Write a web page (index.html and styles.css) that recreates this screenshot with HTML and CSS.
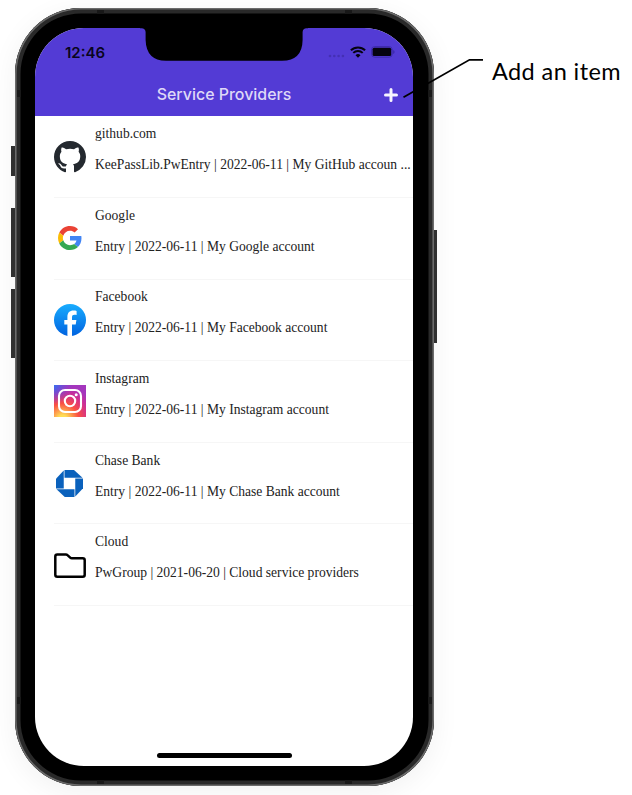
FILE: index.html
```html
<!DOCTYPE html>
<html lang="en">
<head>
<meta charset="utf-8">
<title>Service Providers</title>
<link rel="stylesheet" href="styles.css">
</head>
<body>
<main class="stage">
  <div class="phone">
    <i class="key mute"></i><i class="key vol-up"></i><i class="key vol-down"></i><i class="key power"></i>
    <i class="band top left"></i><i class="band top right"></i><i class="band bottom left"></i><i class="band bottom right"></i>
    <i class="band side-l upper"></i><i class="band side-r upper"></i><i class="band side-l lower"></i><i class="band side-r lower"></i>
    <div class="screen">
      <header class="header">
        <div class="status">
          <span class="time">12:46</span>
          <span class="signals">
            <svg class="dots" width="17" height="4" viewBox="0 0 17 4"><circle cx="2" cy="2" r="1.3"/><circle cx="6.3" cy="2" r="1.3"/><circle cx="10.6" cy="2" r="1.3"/><circle cx="14.9" cy="2" r="1.3"/></svg>
            <svg class="wifi" width="16" height="12" viewBox="0 0 16 12"><path d="M.9 4.3a10.2 10.2 0 0 1 14.2 0M3.3 6.9a6.8 6.8 0 0 1 9.4 0" fill="none" stroke="#050310" stroke-width="2"/><path d="M8 11.8 5.5 9.2a3.6 3.6 0 0 1 5 0z" fill="#050310"/></svg>
            <svg class="battery" width="24" height="12" viewBox="0 0 24 12"><rect x=".6" y=".6" width="20.6" height="10.6" rx="3" fill="none" stroke="#3d2aac" stroke-width="1"/><rect x="1.600" y="1.700" width="18.600" height="8.400" rx="1.5" fill="#050310"/><path d="M22.3 4v4q1.2-.5 1.2-2t-1.2-2" fill="#3725a0"/></svg>
          </span>
        </div>
        <div class="nav">
          <h1 class="title">Service Providers</h1>
          <svg class="add" width="14" height="14" viewBox="0 0 14 14"><path d="M7 1.500v11M1.500 7h11" stroke="#f7f4ff" stroke-width="3" stroke-linecap="round"/></svg>
        </div>
        <svg class="notch" width="168" height="34" viewBox="0 0 168 34"><path d="M0 0h168v.3h-1.5Q163 .3 162.600 4v8Q162.300 32.700 142 32.700H26Q6.300 32.700 5.600 12V4Q5.200.3 1.500.3H0z"/></svg>
      </header>
      <ul class="list">
        <li class="row">
          <svg class="icon" viewBox="0 0 16 16"><path fill="#24292f" d="M8 0C3.580 0 0 3.580 0 8c0 3.540 2.290 6.530 5.470 7.590.4.070.550-.170.550-.380 0-.190-.010-.820-.010-1.490-2.010.370-2.530-.490-2.690-.940-.090-.230-.480-.940-.820-1.130-.280-.150-.680-.520-.010-.530.630-.010 1.080.580 1.230.820.720 1.210 1.870.870 2.330.660.070-.520.280-.870.510-1.070-1.780-.2-3.640-.890-3.640-3.950 0-.870.310-1.590.820-2.150-.080-.2-.360-1.020.080-2.120 0 0 .670-.210 2.200.820.640-.180 1.320-.270 2-.270s1.360.090 2 .270c1.530-1.040 2.200-.820 2.200-.820.440 1.100.160 1.920.080 2.120.510.560.820 1.270.820 2.150 0 3.070-1.870 3.750-3.650 3.950.290.250.540.730.540 1.480 0 1.070-.010 1.930-.010 2.200 0 .210.150.460.550.380A8.010 8.010 0 0 0 16 8c0-4.420-3.580-8-8-8"/></svg>
          <div class="text"><b>github.com</b><span>KeePassLib.PwEntry | 2022-06-11 | My GitHub accoun ...</span></div>
        </li>
        <li class="row">
          <svg class="icon google" viewBox="0 0 48 48"><path fill="#EA4335" d="M24 9.500c3.540 0 6.710 1.220 9.210 3.600l6.850-6.850C35.900 2.380 30.470 0 24 0 14.620 0 6.510 5.380 2.560 13.220l7.980 6.190C12.430 13.720 17.740 9.500 24 9.500"/><path fill="#4285F4" d="M46.980 24.550c0-1.570-.150-3.090-.380-4.550H24v9.020h12.940c-.580 2.960-2.260 5.480-4.780 7.180l7.730 6c4.510-4.180 7.090-10.360 7.090-17.650"/><path fill="#FBBC05" d="M10.530 28.590c-.480-1.450-.760-2.990-.760-4.590s.270-3.140.760-4.590l-7.980-6.190A24 24 0 0 0 0 24c0 3.880.920 7.540 2.560 10.780z"/><path fill="#34A853" d="M24 48c6.480 0 11.930-2.130 15.890-5.810l-7.730-6c-2.150 1.450-4.920 2.300-8.160 2.300-6.260 0-11.570-4.220-13.470-9.910l-7.980 6.190C6.510 42.620 14.620 48 24 48"/></svg>
          <div class="text"><b>Google</b><span>Entry | 2022-06-11 | My Google account</span></div>
        </li>
        <li class="row">
          <svg class="icon" viewBox="0 0 32 32"><defs><linearGradient id="fb" x1="0" y1="0" x2="0" y2="1"><stop stop-color="#18acfe"/><stop offset="1" stop-color="#0163e0"/></linearGradient></defs><circle cx="16" cy="16" r="16" fill="url(#fb)"/><path fill="#fff" d="M13.400 31.800V20.600H10.300V16h3.100v-2.800c0-4.500 2.300-6.600 6.100-6.600 1.200 0 2.200.100 3.100.300v4.100c-.6-.1-1.400-.2-2.100-.2-1.800 0-2.500.7-2.500 2.600V16h4.400l-.7 4.600H18v11.300q-2.300.3-4.600-.1"/></svg>
          <div class="text"><b>Facebook</b><span>Entry | 2022-06-11 | My Facebook account</span></div>
        </li>
        <li class="row">
          <svg class="icon" viewBox="0 0 32 32"><defs><radialGradient id="ig" cx=".27" cy="1.080" r="1.050"><stop stop-color="#fd5"/><stop offset=".13" stop-color="#fd5"/><stop offset=".48" stop-color="#fa5042"/><stop offset=".78" stop-color="#cf2e92"/><stop offset="1" stop-color="#a436bd"/></radialGradient><radialGradient id="ib" cx="0" cy="0" r=".6"><stop stop-color="#3771f0"/><stop offset=".25" stop-color="#5b58df"/><stop offset="1" stop-color="#8040d0" stop-opacity="0"/></radialGradient></defs><path fill="url(#ig)" d="M0 0h32v32H0z"/><path fill="url(#ib)" d="M0 0h32v32H0z"/><g fill="none" stroke="#fff" stroke-width="2.100"><rect x="5" y="5" width="22" height="22" rx="6"/><circle cx="16" cy="16" r="5.200"/></g><circle cx="22.200" cy="9.800" r="1.500" fill="#fff"/></svg>
          <div class="text"><b>Instagram</b><span>Entry | 2022-06-11 | My Instagram account</span></div>
        </li>
        <li class="row">
          <svg class="icon chase" viewBox="0 0 54 54"><g fill="#0a61bc"><path d="M17 0h19l17 15.500H17z"/><path d="M54 17v19.500L38.500 53V17z"/><path d="M37 54H17.500L1 38.500H37z"/><path d="M0 37V17.500L15.500 1V37z"/></g></svg>
          <div class="text"><b>Chase Bank</b><span>Entry | 2022-06-11 | My Chase Bank account</span></div>
        </li>
        <li class="row">
          <svg class="icon" viewBox="0 0 32 32"><path d="M3.300 5.400h8.500q1 0 1.700.7l2.700 2.500q.7.700 1.700.7h10.800q2 0 2 2v14.400q0 2-2 2H3.300q-2 0-2-2V7.400q0-2 2-2z" fill="none" stroke="#000" stroke-width="2.500"/></svg>
          <div class="text"><b>Cloud</b><span>PwGroup | 2021-06-20 | Cloud service providers</span></div>
        </li>
      </ul>
      <div class="home"></div>
    </div>
  </div>
  <p class="note">Add an item</p>
  <svg class="leader" width="84" height="42" viewBox="402 58 84 42"><path d="M403.500 97.200 469.500 59.800H483" fill="none" stroke="#000" stroke-width="1.800"/></svg>
</main>
</body>
</html>
```
FILE: styles.css
```css
* { box-sizing: border-box; }
body { margin: 0; background: #fff; }
.stage {
  position: relative;
  display: flex;
  align-items: flex-start;
  width: 632px;
  height: 795px;
  padding: 8px 0 0 15px;
  overflow: hidden;
}
.phone {
  position: relative;
  flex: none;
  width: 419px;
  height: 778px;
  padding: 20px 21px 20px 20px;
  border-radius: 66px;
  background: #000;
  box-shadow: inset 0 0 0 1.6px #6b6b6b, inset 0 0 0 5.500px #292929, 0 6px 28px rgba(0, 0, 0, .06);
}
.key { position: absolute; width: 4px; background: #303030; }
.mute { left: -4px; top: 138px; height: 30px; }
.vol-up { left: -4px; top: 200px; height: 69px; }
.vol-down { left: -4px; top: 281px; height: 69px; }
.power { right: -3px; top: 222px; width: 3px; height: 113px; }
.band { position: absolute; background: #181818; }
.top, .bottom { width: 7px; height: 4px; }
.top { top: 2px; }
.bottom { bottom: 2px; }
.left { left: 82px; }
.right { right: 82px; }
.side-l, .side-r { width: 4px; height: 7px; }
.side-l { left: 2px; }
.side-r { right: 2px; }
.upper { top: 82px; }
.lower { bottom: 82px; }
.screen {
  display: flex;
  flex-direction: column;
  position: relative;
  width: 378px;
  height: 738px;
  border-radius: 49px;
  background: #fff;
  overflow: hidden;
}
.header { position: relative; flex: none; height: 88.400px; background: #533bd5; }
.notch { position: absolute; left: 105px; top: 0; }
.status {
  display: flex;
  justify-content: space-between;
  height: 48px;
  padding: 0 18px 0 30px;
  align-items: center;
}
.time { font: 600 15px/18px Inter, sans-serif; color: #090520; padding-top: 1px; }
.signals { display: flex; align-items: center; }
.dots { fill: #4430b4; margin: 7px 5px 0 0; }
.wifi { margin-right: 5px; }
.nav { display: flex; align-items: center; justify-content: center; height: 40px; padding-bottom: 2px; position: relative; }
.title { margin: 0; font: 500 15.950px/20px Inter, sans-serif; color: #ded8f7; white-space: nowrap; }
.add { position: absolute; right: 15.500px; top: 12px; }
.list { flex: 1; margin: 0; padding: 0 0 0 19px; list-style: none; }
.row { display: flex; align-items: center; height: 81.600px; border-bottom: 1px solid #f6f6f6; }
.icon { flex: none; width: 32px; height: 32px; margin-right: 9px; }
.google { width: 24px; height: 24px; margin: 0 13px 0 4px; }
.chase { width: 27px; height: 27px; margin: 0 12px 0 2px; }
.text {
  display: flex;
  flex-direction: column;
  gap: 15px;
  padding-bottom: 14px;
  font: 13.570px/16px "Liberation Serif", serif;
  color: #222;
  white-space: nowrap;
}
.text b { font-weight: 400; }
.home { align-self: center; width: 135px; height: 5px; margin-bottom: 8px; border-radius: 3px; background: #000; }
.note { margin: 48px 0 0 58px; font: 23.500px/30px Lato, sans-serif; letter-spacing: .4px; color: #000; white-space: nowrap; }
.leader { position: absolute; left: 402px; top: 58px; }
```
